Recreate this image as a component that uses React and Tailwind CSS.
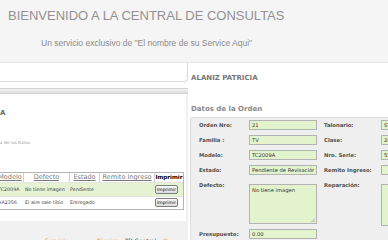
import React from 'react';

const Field = ({ value = '', w = 'w-[68px]' }) => (
  <input
    readOnly
    value={value}
    className={`${w} h-[10px] shrink-0 border border-[#b3b3b3] bg-[#e3f3cd] px-[2px] text-[5.2px] text-[#333] outline-none`}
  />
);

const Label = ({ children, w = 'w-[50px]' }) => (
  <span className={`${w} shrink-0 text-[5.3px] font-bold text-[#4f4f4f] leading-[10px] whitespace-nowrap`}>{children}</span>
);

// box de texto con el tirador dibujado a mano
const Area = ({ value = '', h = 'h-[40px]', w = 'w-[68px]' }) => (
  <div className={`relative ${w} ${h} shrink-0 border border-[#b3b3b3] bg-[#e3f3cd]`}>
    <div className="px-[2px] pt-[2px] text-[5.2px] text-[#333] leading-[6px]">{value}</div>
    <svg className="absolute bottom-[1px] right-[1px] w-[4px] h-[4px]" viewBox="0 0 4 4">
      <path d="M4 0.5L0.5 4M4 2.5L2.5 4" stroke="#888" strokeWidth="0.6" />
    </svg>
  </div>
);

const Row = ({ l1, v1, l2, v2, first }) => (
  <div className={`flex items-center h-[10px] ${first ? 'mt-[2px]' : 'mt-[5px]'}`}>
    <Label>{l1}</Label>
    <Field value={v1} />
    <div className="w-[7px] shrink-0" />
    <Label w="w-[57px]">{l2}</Label>
    <Field value={v2} w="w-[70px]" />
  </div>
);

const ordenes = [
  { modelo: 'TC2009A', defecto: 'No tiene imagen', estado: 'Pendiente', green: true },
  { modelo: 'AA2356', defecto: 'El aire sale tibio', estado: 'Entregado', green: false },
];

export default function App() {
  return (
    <div className="w-[388px] h-[240px] overflow-hidden bg-white flex flex-col font-['DejaVu_Sans',sans-serif]">
      {/* cabecera */}
      <div className="h-[63px] shrink-0 bg-[#f5f5f5] border-b border-[#e6e6e6] font-['Liberation_Sans',Arial,sans-serif]">
        <div className="pt-[8px] pl-[8px] text-[13px] leading-[15px] text-[#929292] whitespace-nowrap">
          BIENVENIDO A LA CENTRAL DE CONSULTAS
        </div>
        <div className="mt-[14.5px] pl-[41px] text-[8.5px] leading-[10px] text-[#8c8c8c] whitespace-nowrap">
          Un servicio exclusivo de "El nombre de su Service Aqui"
        </div>
      </div>

      <div className="flex flex-1 min-h-0">
        {/* columna izquierda */}
        <div className="w-[188px] shrink-0 flex flex-col">
          <div className="h-[19px] shrink-0 border-b border-r border-[#d9d9d9] rounded-br-[4px]" />
          <div className="mt-[6px] h-[6px] shrink-0 bg-gradient-to-b from-[#f2f2f2] to-[#dddddd] border-y border-[#d4d4d4]" />
          <div className="flex flex-col flex-1 border-r-[2px] border-[#f1f1f1]">
            <div className="mt-[16px] w-[5.5px] h-[7px] flex justify-end whitespace-nowrap text-[7px] leading-[7px] font-bold text-[#666]">
              ORDENES DE ALANIZ PATRICIA
            </div>
            <div className="mt-[23.5px] w-[31px] h-[4px] flex justify-end whitespace-nowrap text-[4px] leading-[4px] text-[#9a9a9a]">
              Haga click en el Modelo para Ver los Datos.
            </div>

            {/* tabla de ordenes */}
            <div className="mt-[27.5px] ml-[-4px] w-[188px] shrink-0 border border-[#b5b5b5]">
              <div className="flex h-[9px] items-center text-[6.5px] leading-[9px] text-[#7a7a7a] bg-white">
                <span className="w-[26px] text-center underline">Modelo</span>
                <span className="w-[46px] text-center underline border-l border-[#d0d0d0]">Defecto</span>
                <span className="w-[30px] text-center underline border-l border-[#d0d0d0]">Estado</span>
                <span className="w-[55px] text-center underline border-l border-[#d0d0d0] whitespace-nowrap">Remito Ingreso</span>
                <span className="w-[29px] text-center border-l border-[#d0d0d0] text-[5.6px] font-bold text-black">Imprimir</span>
              </div>
              {ordenes.map((o, i) => (
                <div
                  key={i}
                  className={`flex items-center h-[13.5px] text-[4.8px] text-[#444] whitespace-nowrap border-t border-[#e4e4e4] ${o.green ? 'bg-[#e5f3d3]' : 'bg-white'}`}
                >
                  <span className="w-[26px] pl-[1px]">{o.modelo}</span>
                  <span className="w-[46px] pl-[2px]">{o.defecto}</span>
                  <span className="w-[30px] pl-[1px]">{o.estado}</span>
                  <span className="w-[55px]" />
                  <span className="w-[29px] pl-[1px]">
                    <button className="w-[23px] h-[9px] border border-[#7d7d7d] rounded-[2px] bg-gradient-to-b from-[#fafafa] to-[#dedede] text-[4.5px] leading-[7px] text-black">
                      Imprimir
                    </button>
                  </span>
                </div>
              ))}
            </div>

            <div className="mt-[11px] flex-1 bg-[#f1f1f1] pt-[16px] pl-[45px] flex gap-[6px] whitespace-nowrap text-[6px] leading-[7px]">
              <span className="text-[#e0963a]">Servicio</span>
              <span className="text-[#e0963a] ml-[22px]">Técnico</span>
              <span className="text-[#444]">TB Central</span>
              <span className="text-[#e0963a]">©</span>
            </div>
          </div>
        </div>

        {/* columna derecha */}
        <div className="flex-1 pl-[2px] flex flex-col">
          <div className="mt-[12px] pl-[1px] text-[7px] leading-[7px] font-bold text-[#777] whitespace-nowrap">
            ALANIZ PATRICIA
          </div>
          <div className="mt-[24px] pl-[1px] text-[7px] leading-[7px] font-bold text-[#8a8a8a] whitespace-nowrap">
            Datos de la Orden
          </div>
          <div className="mt-[4px] flex-1 bg-[#efefef] border-l border-t border-[#e0e0e0] pl-[8px] w-[300px]">
            <Row first l1="Orden Nro:" v1="21" l2="Talonario:" v2="ST-0001" />
            <Row l1="Familia :" v1="TV" l2="Clase:" v2="2012" />
            <Row l1="Modelo:" v1="TC2009A" l2="Nro. Serie:" v2="52148796" />
            <Row l1="Estado:" v1="Pendiente de Revisación" l2="Remito Ingreso:" v2="" />
            <div className="flex items-start mt-[4px]">
              <span className="w-[50px] shrink-0 mt-[3px] text-[5.3px] font-bold text-[#4f4f4f] leading-[6px]">Defecto:</span>
              <div className="mt-[5px]">
                <Area value="No tiene imagen" />
              </div>
              <div className="w-[7px] shrink-0" />
              <span className="w-[57px] shrink-0 mt-[3px] text-[5.3px] font-bold text-[#4f4f4f] leading-[6px]">Reparación:</span>
              <div className="mt-[5px]">
                <Area h="h-[42px]" w="w-[70px]" />
              </div>
            </div>
            <div className="flex items-center h-[10px] mt-[3px]">
              <Label>Presupuesto:</Label>
              <Field value="0.00" />
            </div>
          </div>
        </div>
      </div>
    </div>
  );
}
